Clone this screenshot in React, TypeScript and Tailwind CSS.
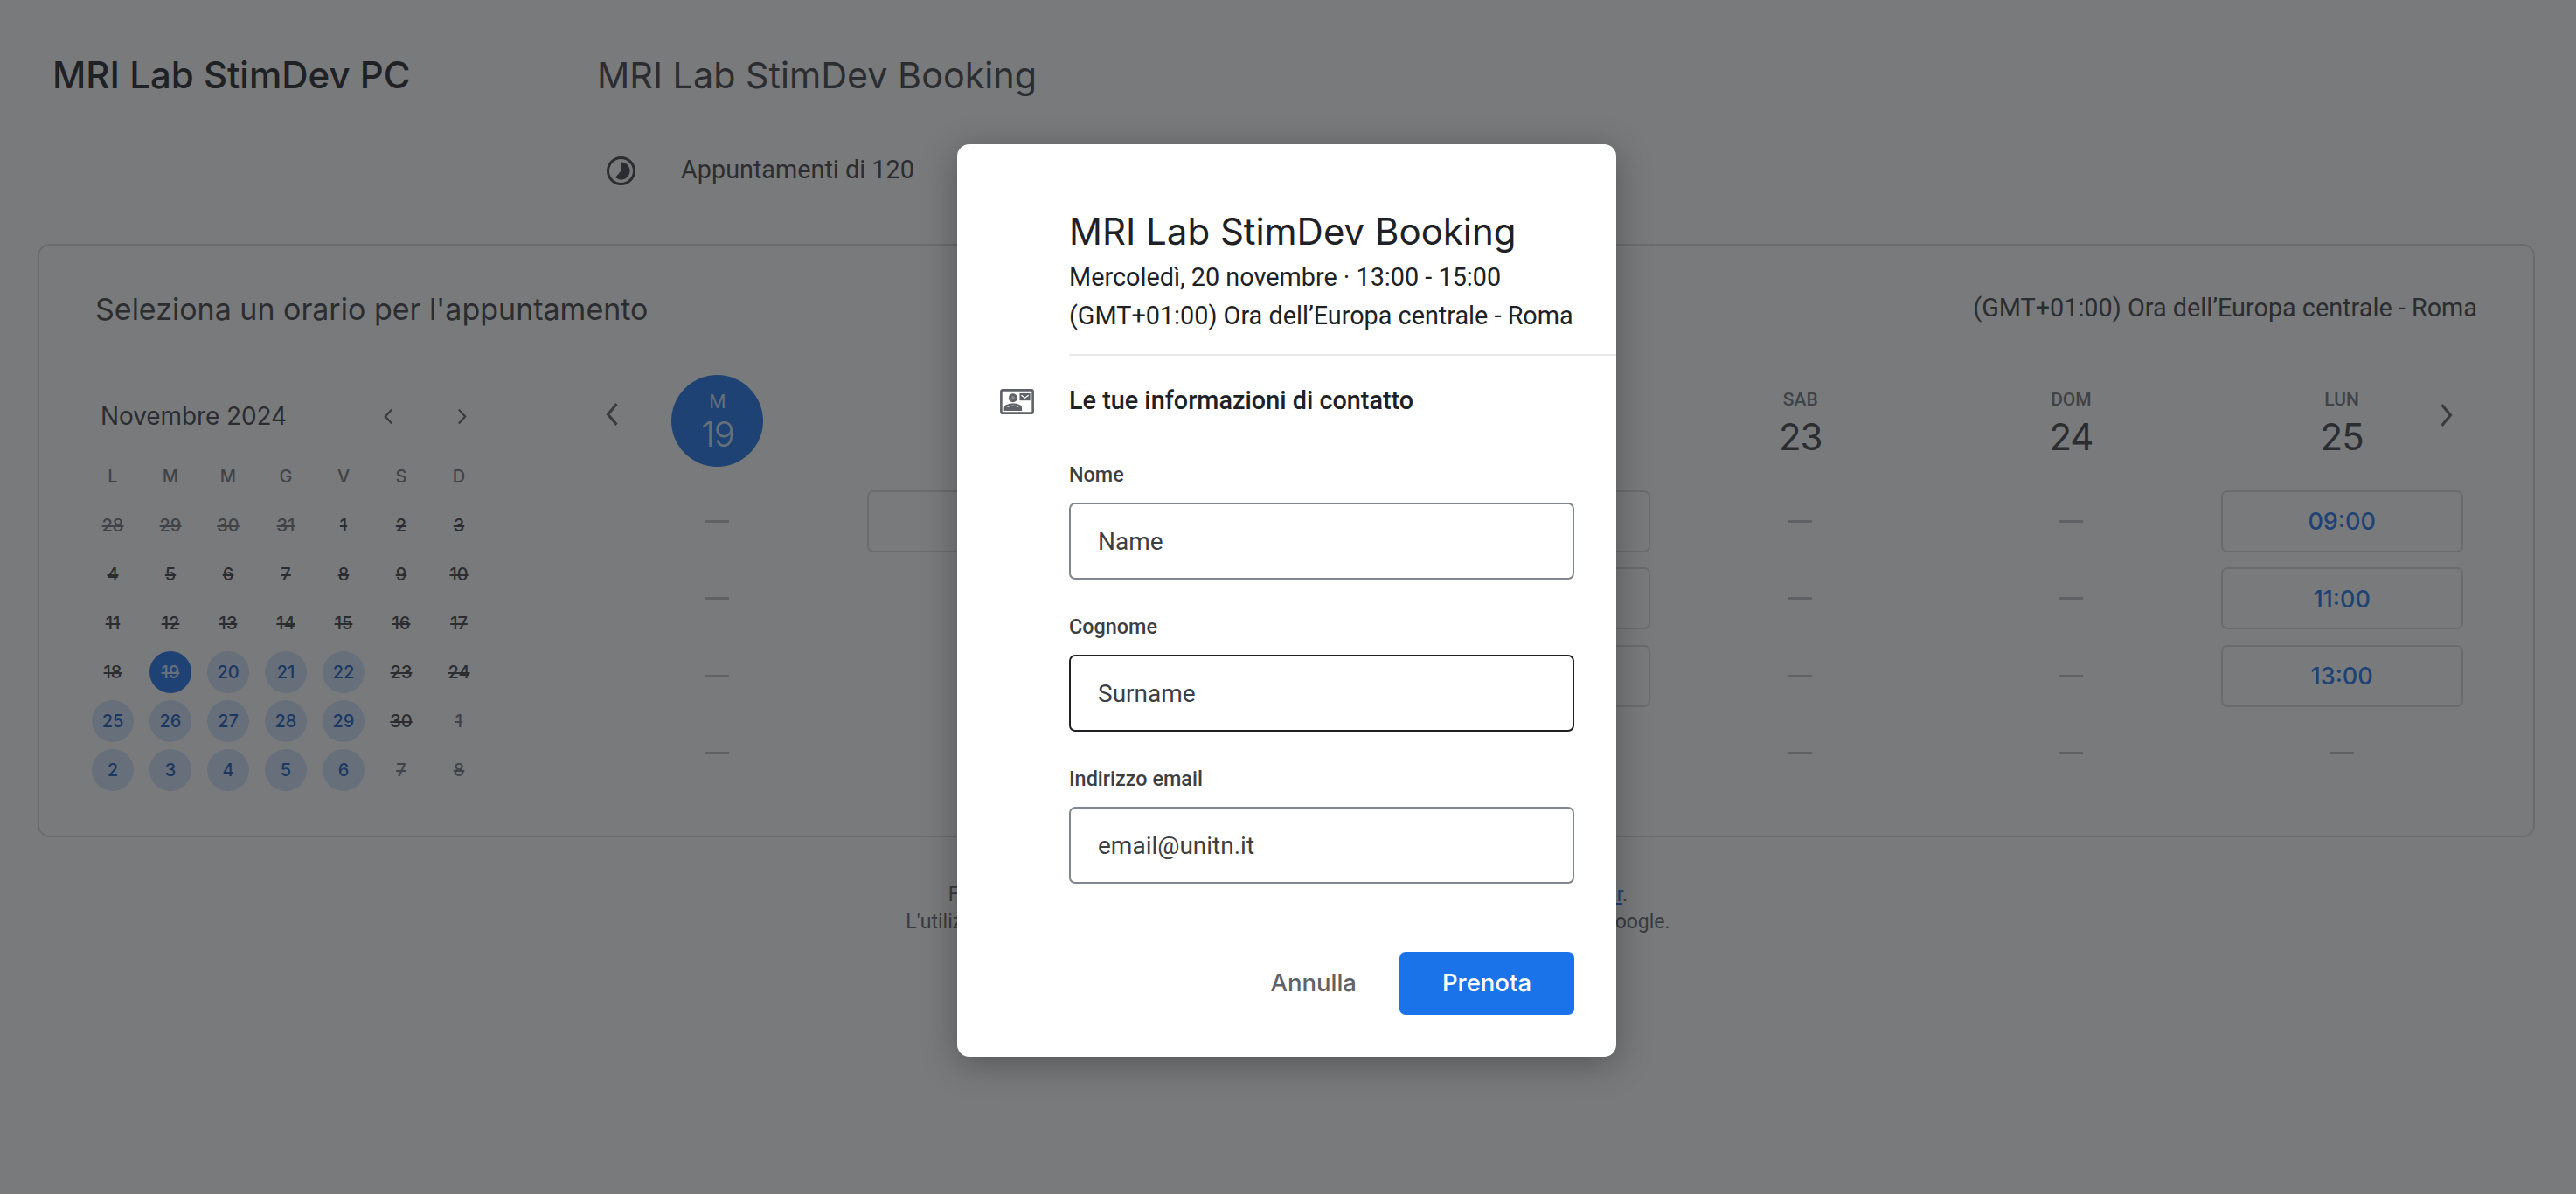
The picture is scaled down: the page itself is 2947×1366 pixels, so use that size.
import React from "react";

const gs = "font-['Inter',sans-serif]";

function Chevron({ dir, w, h, sw = 2.4 }: { dir: "l" | "r"; w: number; h: number; sw?: number }) {
  return (
    <svg width={w} height={h} viewBox="0 0 12 20" fill="none" stroke="#5f6368" strokeWidth={sw} preserveAspectRatio="none">
      {dir === "l" ? <polyline points="10,1.5 2,10 10,18.5" /> : <polyline points="2,1.5 10,10 2,18.5" />}
    </svg>
  );
}

const weekdays = ["L", "M", "M", "G", "V", "S", "D"];
type Day = { n: number; s: "past" | "dim" | "sel" | "open" };
const rows: Day[][] = [
  [{ n: 28, s: "dim" }, { n: 29, s: "dim" }, { n: 30, s: "dim" }, { n: 31, s: "dim" }, { n: 1, s: "past" }, { n: 2, s: "past" }, { n: 3, s: "past" }],
  [4, 5, 6, 7, 8, 9, 10].map((n) => ({ n, s: "past" as const })),
  [11, 12, 13, 14, 15, 16, 17].map((n) => ({ n, s: "past" as const })),
  [{ n: 18, s: "past" }, { n: 19, s: "sel" }, { n: 20, s: "open" }, { n: 21, s: "open" }, { n: 22, s: "open" }, { n: 23, s: "past" }, { n: 24, s: "past" }],
  [{ n: 25, s: "open" }, { n: 26, s: "open" }, { n: 27, s: "open" }, { n: 28, s: "open" }, { n: 29, s: "open" }, { n: 30, s: "past" }, { n: 1, s: "dim" }],
  [{ n: 2, s: "open" }, { n: 3, s: "open" }, { n: 4, s: "open" }, { n: 5, s: "open" }, { n: 6, s: "open" }, { n: 7, s: "dim" }, { n: 8, s: "dim" }],
];

const dayClass: Record<Day["s"], string> = {
  past: "text-[#3c4043] line-through",
  dim: "text-[#70757a] line-through",
  sel: "bg-[#1a73e8] text-[#d2e3fc] line-through rounded-full",
  open: "bg-[#d2e3fc] text-[#185abc] rounded-full",
};

function MiniCalendar() {
  return (
    <div className="w-[462px] -ml-[13px] shrink-0">
      <div className="flex items-center h-10 mt-[83px] pl-[19px] pr-[12px]">
        <span className={`${gs} text-[28px] text-[#3c4043] tracking-[-0.1px]`}>Novembre 2024</span>
        <div className="ml-auto flex gap-[48px]">
          <span className="w-9 flex justify-center"><Chevron dir="l" w={11} h={19} /></span>
          <span className="w-9 flex justify-center"><Chevron dir="r" w={11} h={19} /></span>
        </div>
      </div>
      <div className={`${gs} grid grid-cols-7 mt-[21px] text-[20px] font-medium`}>
        {weekdays.map((d, i) => (
          <div key={i} className="h-14 flex items-center justify-center text-[#70757a]">{d}</div>
        ))}
        {rows.flat().map((d, i) => (
          <div key={i} className="h-14 flex items-center justify-center">
            <span className={`w-12 h-12 flex items-center justify-center ${dayClass[d.s]}`}>{d.n}</span>
          </div>
        ))}
      </div>
    </div>
  );
}

type Col = { wd: string; n: number; slots: (string | null)[]; sel?: boolean };
const cols: Col[] = [
  { wd: "M", n: 19, slots: [null, null, null, null], sel: true },
  { wd: "MER", n: 20, slots: ["13:00", null, null, null] },
  { wd: "GIO", n: 21, slots: ["11:00", null, null, null] },
  { wd: "VEN", n: 22, slots: ["09:00", "11:00", "13:00", null] },
  { wd: "SAB", n: 23, slots: [null, null, null, null] },
  { wd: "DOM", n: 24, slots: [null, null, null, null] },
  { wd: "LUN", n: 25, slots: ["09:00", "11:00", "13:00", null] },
];

function Week() {
  return (
    <div className="relative flex-1 ml-[108px] grid grid-cols-7 mt-[56px]">
      <span className="absolute left-[27px] top-[31px]"><Chevron dir="l" w={15} h={28} /></span>
      <span className="absolute right-[28px] top-[32px]"><Chevron dir="r" w={15} h={28} /></span>
      {cols.map((c) => (
        <div key={c.n} className="flex flex-col items-center">
          {c.sel ? (
            <div className="w-[105px] h-[105px] rounded-full bg-[#1a73e8] flex flex-col items-center text-[#d2e3fc] font-['Roboto',sans-serif]">
              <span className="text-[22px] leading-[26px] mt-[18px]">{c.wd}</span>
              <span className={`${gs} text-[40px] leading-[48px] font-light tracking-[-1px]`}>{c.n}</span>
            </div>
          ) : (
            <div className="h-[105px] flex flex-col items-center">
              <span className="text-[21px] leading-6 mt-[16px] text-[#70757a] font-['Roboto',sans-serif] font-medium">{c.wd}</span>
              <span className={`${gs} text-[42px] leading-[52px] mt-[5px] text-[#3c4043] tracking-[-1px]`}>{c.n}</span>
            </div>
          )}
          <div className="flex flex-col gap-[17.4px] mt-[27px] w-full items-center">
            {c.slots.map((s, i) =>
              s ? (
                <div key={i} className={`${gs} w-[277px] h-[71px] pt-[2px] border-2 border-[#dadce0] rounded-[7px] flex items-center justify-center text-[#1a73e8] text-[27px] font-medium`}>
                  {s}
                </div>
              ) : (
                <div key={i} className="w-[277px] h-[71px] flex items-center justify-center">
                  <span className="w-[27px] h-[3px] bg-[#bdc1c6]" />
                </div>
              )
            )}
          </div>
        </div>
      ))}
    </div>
  );
}

function Field({ label, value, active, first }: { label: string; value: string; active?: boolean; first?: boolean }) {
  return (
    <div className={first ? "mt-[47px]" : "mt-[37px]"}>
      <div className="h-9 flex items-center text-[23.4px] font-medium text-[#3c4043]">{label}</div>
      <input
        readOnly
        defaultValue={value}
        className={`mt-[13px] block w-[578px] h-[88px] bg-white rounded-[7px] pl-[31px] text-[28px] text-[#3c4043] outline-none ${active ? "border-[2.5px] border-[#202124]" : "border-2 border-[#80868b]"}`}
      />
    </div>
  );
}

function Modal() {
  return (
    <div className="absolute left-[1095px] top-[165px] w-[754px] h-[1044px] bg-white rounded-[14px] shadow-[0_8px_40px_rgba(0,0,0,0.3)] pt-[74px] font-['Roboto',sans-serif]">
      <div className="pl-[128px]">
        <div className={`${gs} text-[42px] leading-[52px] text-[#202124]`}>MRI Lab StimDev Booking</div>
        <div className="mt-[4px] text-[28.8px] leading-[44px] text-[#202124]">Mercoledì, 20 novembre · 13:00 - 15:00</div>
        <div className="text-[28.8px] leading-[44px] text-[#202124] whitespace-nowrap">(GMT+01:00) Ora dell’Europa centrale - Roma</div>
        <div className="mt-[22px] h-[2px] bg-[#e8eaed]" />
      </div>
      <div className="mt-[32px] pl-[49px] flex items-center h-10 gap-10">
        <svg width="39" height="29" viewBox="0 0 118 88" className="shrink-0">
          <rect x="4" y="4" width="110" height="80" rx="5" fill="none" stroke="#5f6368" strokeWidth="8" />
          <circle cx="45" cy="31" r="11" fill="#80868b" stroke="#5f6368" strokeWidth="8" />
          <path d="M14 76 V66 C14 54 32 50 45 50 C58 50 76 54 76 66 V76 Z" fill="#5f6368" />
          <path d="M26 62 C34 57 56 57 64 62" fill="none" stroke="#fff" strokeWidth="3" />
          <rect x="68" y="15" width="37" height="25" fill="#5f6368" />
          <polyline points="74,22 86.5,31 99,22" fill="none" stroke="#fff" strokeWidth="4" />
        </svg>
        <span className="text-[28.8px] font-medium text-[#202124]">Le tue informazioni di contatto</span>
      </div>
      <div className="pl-[128px]">
        <Field first label="Nome" value="Name" />
        <Field label="Cognome" value="Surname" active />
        <Field label="Indirizzo email" value="email@unitn.it" />
        <div className="mt-[78px] w-[578px] flex justify-end items-center">
          <button className={`${gs} text-[27.5px] font-medium text-[#5f6368]`}>Annulla</button>
          <button className={`${gs} ml-[49px] w-[200px] h-[72px] rounded-[7px] bg-[#1a73e8] text-white text-[27.5px] font-medium`}>Prenota</button>
        </div>
      </div>
    </div>
  );
}

export default function App() {
  return (
    <div className="relative w-full h-[1366px] overflow-hidden bg-white font-['Roboto',sans-serif]">
      <header className="flex pt-[60px] pl-[60px]">
        <div className={`${gs} w-[623px] text-[42px] leading-[52px] font-medium text-[#202124]`}>MRI Lab StimDev PC</div>
        <div>
          <div className={`${gs} text-[41.3px] leading-[52px] text-[#3c4043]`}>MRI Lab StimDev Booking</div>
          <div className="flex items-center h-10 mt-[63px] pl-[11px]">
            <svg width="33" height="33" viewBox="0 0 33 33">
              <circle cx="16.5" cy="16.5" r="15" fill="none" stroke="#3c4043" strokeWidth="3" />
              <path d="M16.5 6.5 A10 10 0 1 1 10 24 L16.5 16.5 Z" fill="#3c4043" />
            </svg>
            <span className="ml-[52px] text-[28.8px] text-[#3c4043]">Appuntamenti di 120</span>
          </div>
        </div>
      </header>

      <section className="mt-[64px] ml-[43px] mr-[47px] h-[679px] border-2 border-[#dadce0] rounded-[14px] px-16 pt-[52px]">
        <div className="flex items-center justify-between h-10">
          <span className={`${gs} text-[34px] text-[#3c4043]`}>Seleziona un orario per l'appuntamento</span>
          <span className="text-[28.8px] text-[#3c4043] whitespace-nowrap">(GMT+01:00) Ora dell’Europa centrale - Roma</span>
        </div>
        <div className="flex">
          <MiniCalendar />
          <Week />
        </div>
      </section>

      <footer className="mt-[50px] text-center text-[23px] leading-[31px] text-[#5f6368]">
        <div>Fornito dal servizio di prenotazione per gli appuntamenti di <span className="underline text-[#1a73e8]">Google Calendar</span>.</div>
        <div>L'utilizzo del sito è soggetto ai Termini di servizio e alle Norme sulla privacy di Google.</div>
      </footer>

      <div className="absolute inset-0 bg-[#202124]/60" />
      <Modal />
    </div>
  );
}
